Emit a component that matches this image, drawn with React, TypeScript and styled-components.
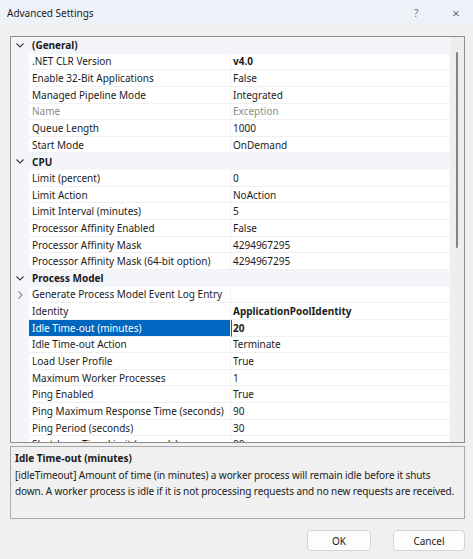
import React from "react";
import styled, { createGlobalStyle } from "styled-components";

const GlobalStyle = createGlobalStyle`
  body {
    margin: 0;
    font-family: "Noto Sans", "Open Sans", sans-serif;
    font-size: 10px;
    color: #1b1b1b;
  }
`;

const ROW_H = 16.65;

const StyledDialog = styled.div`
  width: 473px;
  height: 559px;
  background-color: #f0f0f0;
  display: flex;
  flex-direction: column;
  overflow: hidden;
`;

const StyledTitleBar = styled.div`
  height: 26px;
  flex-shrink: 0;
  background-color: #eef1f8;
  display: flex;
  align-items: center;
  padding: 0 0 0 7px;
  font-size: 10px;
`;

const StyledTitle = styled.div`
  flex: 1;
`;

const StyledTitleButton = styled.div<{ $w: number; $big?: boolean }>`
  width: ${(p) => p.$w}px;
  text-align: center;
  color: #333;
  font-weight: 300;
  font-size: ${(p) => (p.$big ? "13px" : "10px")};
`;

const StyledBody = styled.div`
  flex: 1;
  display: flex;
  flex-direction: column;
  padding: 10px 8px 8px 10px;
`;

const StyledGrid = styled.div`
  height: 407px;
  box-sizing: border-box;
  border: 1px solid #8e8e8e;
  display: flex;
  background-color: #ffffff;
`;

const StyledRows = styled.div`
  flex: 1;
  overflow: hidden;
`;

const StyledRow = styled.div<{ $category?: boolean }>`
  height: ${ROW_H}px;
  box-sizing: border-box;
  display: grid;
  grid-template-columns: 18px 202px 1fr;
  align-items: stretch;
  background-color: ${(p) => (p.$category ? "#f3f5f9" : "#ffffff")};
  font-weight: ${(p) => (p.$category ? 700 : 400)};
`;

const StyledMargin = styled.div`
  background-color: #f3f5f9;
  display: flex;
  align-items: center;
  justify-content: center;
`;

const StyledName = styled.div<{ $selected?: boolean; $disabled?: boolean; $category?: boolean }>`
  display: flex;
  align-items: center;
  padding-left: 3px;
  white-space: nowrap;
  overflow: hidden;
  border-bottom: ${(p) => (p.$category ? "none" : "1px solid #f0f0f0")};
  border-right: ${(p) => (p.$category ? "none" : "1px solid #f0f0f0")};
  background-color: ${(p) => (p.$selected ? "#0067c0" : "transparent")};
  color: ${(p) => (p.$selected ? "#ffffff" : p.$disabled ? "#8c8c8c" : "inherit")};
`;

const StyledValue = styled.div<{ $bold?: boolean; $disabled?: boolean; $selected?: boolean }>`
  display: flex;
  align-items: center;
  padding-left: ${(p) => (p.$selected ? "1px" : "2px")};
  white-space: nowrap;
  overflow: hidden;
  border-bottom: 1px solid #f0f0f0;
  border-left: ${(p) => (p.$selected ? "1px solid #0067c0" : "none")};
  font-weight: ${(p) => (p.$bold ? 700 : 400)};
  color: ${(p) => (p.$disabled ? "#8c8c8c" : "inherit")};
`;

const StyledScrollbar = styled.div`
  width: 14px;
  flex-shrink: 0;
  background-color: #eeeeee;
  border-left: 1px solid #f7f7f7;
  padding-top: 15px;
  display: flex;
  justify-content: center;
`;

const StyledThumb = styled.div`
  width: 2px;
  height: 196px;
  border-radius: 1px;
  background-color: #858585;
`;

const StyledDescription = styled.div`
  margin-top: 3px;
  height: 73px;
  box-sizing: border-box;
  border: 1px solid #a9a9a9;
  padding: 3px 8px 3px 4px;
  line-height: 16.5px;
`;

const StyledDescTitle = styled.div`
  font-weight: 700;
`;

const StyledDescText = styled.div`
  letter-spacing: -0.09px;
`;

const StyledButtons = styled.div`
  margin-top: 11px;
  display: flex;
  justify-content: flex-end;
  gap: 22px;
`;

const StyledButton = styled.button<{ $w: number }>`
  width: ${(p) => p.$w}px;
  height: 21px;
  background-color: #fdfdfd;
  border: 1px solid #d3d3d3;
  border-radius: 4px;
  font-family: "Noto Sans", "Open Sans", sans-serif;
  font-size: 10px;
  color: #1b1b1b;
  padding: 0;
`;

const Chevron = ({ open }: { open: boolean }) =>
  open ? (
    <svg width="8" height="5" viewBox="0 0 8 5">
      <polyline points="0.5,0.5 4,4 7.5,0.5" fill="none" stroke="#3a3a3a" strokeWidth="1.1" />
    </svg>
  ) : (
    <svg width="5" height="8" viewBox="0 0 5 8">
      <polyline points="0.5,0.5 4,4 0.5,7.5" fill="none" stroke="#8a8a8a" strokeWidth="1.1" />
    </svg>
  );

type Item =
  | { kind: "cat"; name: string }
  | {
      kind: "prop";
      name: string;
      value: string;
      bold?: boolean;
      disabled?: boolean;
      selected?: boolean;
      collapsed?: boolean;
    };

const items: Item[] = [
  { kind: "cat", name: "(General)" },
  { kind: "prop", name: ".NET CLR Version", value: "v4.0", bold: true },
  { kind: "prop", name: "Enable 32-Bit Applications", value: "False" },
  { kind: "prop", name: "Managed Pipeline Mode", value: "Integrated" },
  { kind: "prop", name: "Name", value: "Exception", disabled: true },
  { kind: "prop", name: "Queue Length", value: "1000" },
  { kind: "prop", name: "Start Mode", value: "OnDemand" },
  { kind: "cat", name: "CPU" },
  { kind: "prop", name: "Limit (percent)", value: "0" },
  { kind: "prop", name: "Limit Action", value: "NoAction" },
  { kind: "prop", name: "Limit Interval (minutes)", value: "5" },
  { kind: "prop", name: "Processor Affinity Enabled", value: "False" },
  { kind: "prop", name: "Processor Affinity Mask", value: "4294967295" },
  { kind: "prop", name: "Processor Affinity Mask (64-bit option)", value: "4294967295" },
  { kind: "cat", name: "Process Model" },
  { kind: "prop", name: "Generate Process Model Event Log Entry", value: "", collapsed: true },
  { kind: "prop", name: "Identity", value: "ApplicationPoolIdentity", bold: true },
  { kind: "prop", name: "Idle Time-out (minutes)", value: "20", bold: true, selected: true },
  { kind: "prop", name: "Idle Time-out Action", value: "Terminate" },
  { kind: "prop", name: "Load User Profile", value: "True" },
  { kind: "prop", name: "Maximum Worker Processes", value: "1" },
  { kind: "prop", name: "Ping Enabled", value: "True" },
  { kind: "prop", name: "Ping Maximum Response Time (seconds)", value: "90" },
  { kind: "prop", name: "Ping Period (seconds)", value: "30" },
  { kind: "prop", name: "Shutdown Time Limit (seconds)", value: "90" },
];

export default function App() {
  return (
    <>
      <GlobalStyle />
      <StyledDialog>
        <StyledTitleBar>
          <StyledTitle>Advanced Settings</StyledTitle>
          <StyledTitleButton $w={46}>?</StyledTitleButton>
          <StyledTitleButton $w={34} $big>
            ×
          </StyledTitleButton>
        </StyledTitleBar>
        <StyledBody>
          <StyledGrid>
            <StyledRows>
              {items.map((it) =>
                it.kind === "cat" ? (
                  <StyledRow key={it.name} $category>
                    <StyledMargin>
                      <Chevron open />
                    </StyledMargin>
                    <StyledName $category>{it.name}</StyledName>
                    <div />
                  </StyledRow>
                ) : (
                  <StyledRow key={it.name}>
                    <StyledMargin>{it.collapsed && <Chevron open={false} />}</StyledMargin>
                    <StyledName $selected={it.selected} $disabled={it.disabled}>
                      {it.name}
                    </StyledName>
                    <StyledValue $bold={it.bold} $disabled={it.disabled} $selected={it.selected}>
                      {it.value}
                    </StyledValue>
                  </StyledRow>
                )
              )}
            </StyledRows>
            <StyledScrollbar>
              <StyledThumb />
            </StyledScrollbar>
          </StyledGrid>
          <StyledDescription>
            <StyledDescTitle>Idle Time-out (minutes)</StyledDescTitle>
            <StyledDescText>
              [idleTimeout] Amount of time (in minutes) a worker process will remain idle before it shuts
              down. A worker process is idle if it is not processing requests and no new requests are
              received.
            </StyledDescText>
          </StyledDescription>
          <StyledButtons>
            <StyledButton $w={64}>OK</StyledButton>
            <StyledButton $w={72}>Cancel</StyledButton>
          </StyledButtons>
        </StyledBody>
      </StyledDialog>
    </>
  );
}
